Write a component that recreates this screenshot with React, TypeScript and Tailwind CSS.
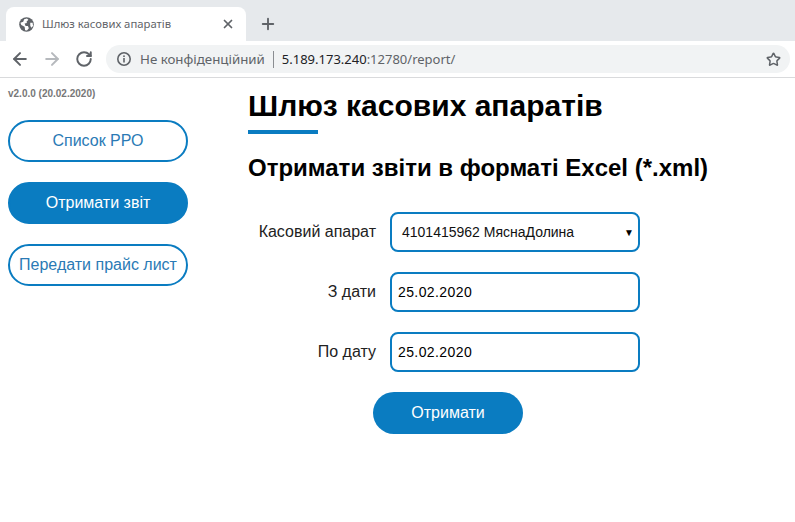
import { ArrowLeft, ArrowRight, RotateCw, Star, Plus, X } from 'lucide-react';

function Globe() {
  return (
    <svg width="15" height="15" viewBox="0 0 16 16" className="shrink-0">
      <circle cx="8" cy="8" r="7.8" fill="#5f6368" />
      <path d="M1.5 6 4.5 5 5.5 2.5 8.5 1.5 10 3 8 5 8.5 6.5 6 7 7 9.5 9.5 9.5 10.5 12 8.5 14.5 6.5 14 6 10.5 2.5 8.5Z" fill="#fff" />
      <path d="M12 6 14.5 6 15 9.5 13 11.5 12 9Z" fill="#fff" />
    </svg>
  );
}

function Info() {
  return (
    <svg width="16" height="16" viewBox="0 0 16 16" className="shrink-0">
      <circle cx="8" cy="8" r="6.2" fill="none" stroke="#5f6368" strokeWidth="1.6" />
      <rect x="7.2" y="7" width="1.6" height="4.5" fill="#5f6368" />
      <rect x="7.2" y="4.4" width="1.6" height="1.6" fill="#5f6368" />
    </svg>
  );
}

function Browser() {
  return (
    <div className="font-['Noto_Sans',sans-serif]">
      <div className="h-[41px] bg-[#e6e9ec] flex items-end pl-[6px]">
        <div className="w-[240px] h-[34px] bg-white rounded-t-lg flex items-center pl-[13px] pr-[11px]">
          <Globe />
          <span className="ml-[8px] text-[11.3px] text-[#5f6368] flex-1 whitespace-nowrap">Шлюз касових апаратів</span>
          <X size={14} strokeWidth={3} className="text-[#5f6368]" />
        </div>
        <Plus size={18} strokeWidth={2.5} className="text-[#5f6368] ml-[13px] mb-[8px]" />
      </div>
      <div className="h-[37px] bg-white border-b border-[#d9dadc] flex items-center pl-[10px] pr-[5px]">
        <ArrowLeft size={20} strokeWidth={2.4} className="text-[#5f6368]" />
        <ArrowRight size={20} strokeWidth={2.4} className="text-[#b6b9bd] ml-[12px]" />
        <RotateCw size={18} strokeWidth={2.6} className="text-[#5f6368] ml-[13px]" />
        <div className="ml-[13px] flex-1 h-[28px] bg-[#f1f3f4] rounded-full flex items-center pl-[10px] pr-[9px] text-[13.3px] whitespace-nowrap">
          <Info />
          <span className="ml-[8px] pt-[1px] text-[#5f6368]">Не конфіденційний</span>
          <span className="mx-[8px] w-px h-[17px] bg-[#8a8d91]" />
          <span className="pt-[1px] text-[#202124] text-[13px]">5.189.173.240</span>
          <span className="pt-[1px] text-[#5f6368] text-[13px]">:12780/report/</span>
          <Star size={15} strokeWidth={2.4} className="ml-auto text-[#5f6368]" />
        </div>
      </div>
    </div>
  );
}

function SideButton({ label, active }: { label: string; active?: boolean }) {
  return (
    <a
      className={
        active
          ? 'h-[42px] w-[180px] rounded-full border-2 border-[#0a7cc1] bg-[#0a7cc1] text-white flex items-center justify-center text-[16px]'
          : 'h-[42px] w-[180px] rounded-full border-2 border-[#0a7cc1] bg-white text-[#2a7ab5] flex items-center justify-center text-[16px] whitespace-nowrap'
      }
    >
      {label}
    </a>
  );
}

function Row({ label, children }: { label: string; children: React.ReactNode }) {
  return (
    <div className="flex items-center h-[40px]">
      <label className="w-[128px] text-right text-[16px] text-[#222] whitespace-nowrap">{label}</label>
      <div className="ml-[14px]">{children}</div>
    </div>
  );
}

const fieldClass =
  'w-[250px] h-[40px] rounded-lg border-2 border-[#0a7cc1] bg-white text-[14px] text-black flex items-center';

export default function App() {
  return (
    <div className="w-[795px] h-[522px] bg-white overflow-hidden font-['Liberation_Sans',Arial,sans-serif]">
      <Browser />
      <div className="flex">
        <aside className="w-[248px] shrink-0 pl-[8px]">
          <p className="mt-[10px] text-[10px] leading-[12px] font-bold text-[#777]">v2.0.0 (20.02.2020)</p>
          <div className="mt-[20px] flex flex-col gap-[20px]">
            <SideButton label="Список РРО" />
            <SideButton label="Отримати звіт" active />
            <SideButton label="Передати прайс лист" />
          </div>
        </aside>
        <main>
          <h1 className="mt-[10px] text-[30px] leading-[36px] font-bold text-black">Шлюз касових апаратів</h1>
          <div className="mt-[6px] w-[70px] h-[4px] bg-[#0a7cc1]" />
          <h2 className="mt-[20px] text-[24px] leading-[28px] font-bold text-black whitespace-nowrap">
            Отримати звіти в форматі Excel (*.xml)
          </h2>
          <form className="mt-[30px] flex flex-col gap-[20px]">
            <Row label="Касовий апарат">
              <div className={fieldClass + ' pl-[10px] pr-[4px] justify-between'}>
                <span className="text-[#111]">4101415962 МяснаДолина</span>
                <span className="text-[10px] text-black">▼</span>
              </div>
            </Row>
            <Row label="З дати">
              <div className={fieldClass + ' pl-[6px] tracking-[0.4px]'}>25.02.2020</div>
            </Row>
            <Row label="По дату">
              <div className={fieldClass + ' pl-[6px] tracking-[0.4px]'}>25.02.2020</div>
            </Row>
            <div className="pl-[125px]">
              <button type="button" className="w-[150px] h-[42px] rounded-full bg-[#0a7cc1] text-white text-[16px]">
                Отримати
              </button>
            </div>
          </form>
        </main>
      </div>
    </div>
  );
}
